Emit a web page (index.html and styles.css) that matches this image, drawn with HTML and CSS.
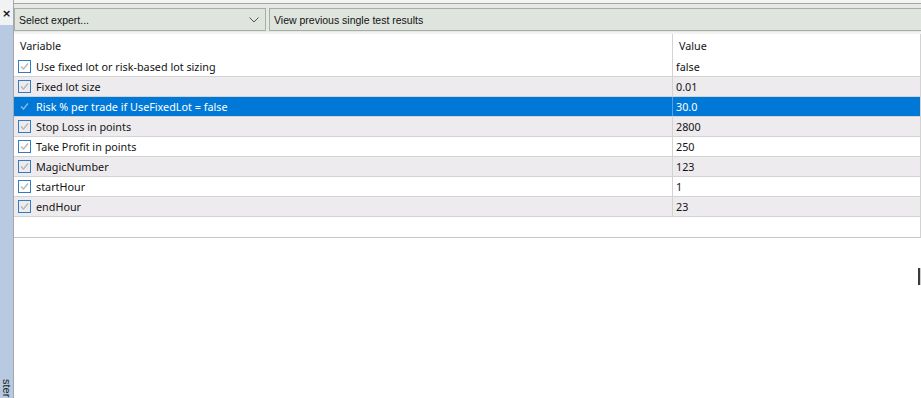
FILE: index.html
```html
<!DOCTYPE html>
<html>
<head>
<meta charset="utf-8">
<link rel="stylesheet" href="styles.css">
</head>
<body>
<div class="side">
  <div class="side-top"><span class="close">×</span></div>
  <div class="side-tab"><span class="tab-label">ster</span></div>
</div>
<div class="main">
  <div class="topline"></div>
  <div class="toolbar">
    <div class="select"><span>Select expert...</span>
      <svg class="chev" width="10" height="6" viewBox="0 0 10 6"><path d="M0.5 0.5 L5 5 L9.5 0.5" fill="none" stroke="#555" stroke-width="1"/></svg>
    </div>
    <div class="button">View previous single test results</div>
  </div>
  <div class="gap"></div>
  <div class="grid">
    <div class="head"><div class="cell c1">Variable</div><div class="cell c2">Value</div></div>
    <div class="row"><div class="cell c1"><span class="cb"><svg width="11" height="11" viewBox="0 0 11 11"><path d="M2 5.5 L4.5 8 L9 2.5" fill="none" stroke="#b4b4b4" stroke-width="1.2"/></svg></span>Use fixed lot or risk-based lot sizing</div><div class="cell c2">false</div></div>
    <div class="row alt"><div class="cell c1"><span class="cb"><svg width="11" height="11" viewBox="0 0 11 11"><path d="M2 5.5 L4.5 8 L9 2.5" fill="none" stroke="#b4b4b4" stroke-width="1.2"/></svg></span>Fixed lot size</div><div class="cell c2">0.01</div></div>
    <div class="row sel"><div class="cell c1"><span class="cb"><svg width="11" height="11" viewBox="0 0 11 11"><path d="M2 5.5 L4.5 8 L9 2.5" fill="none" stroke="#9fb9d6" stroke-width="1.2"/></svg></span>Risk % per trade if UseFixedLot = false</div><div class="cell c2">30.0</div></div>
    <div class="row alt"><div class="cell c1"><span class="cb"><svg width="11" height="11" viewBox="0 0 11 11"><path d="M2 5.5 L4.5 8 L9 2.5" fill="none" stroke="#b4b4b4" stroke-width="1.2"/></svg></span>Stop Loss in points</div><div class="cell c2">2800</div></div>
    <div class="row"><div class="cell c1"><span class="cb"><svg width="11" height="11" viewBox="0 0 11 11"><path d="M2 5.5 L4.5 8 L9 2.5" fill="none" stroke="#b4b4b4" stroke-width="1.2"/></svg></span>Take Profit in points</div><div class="cell c2">250</div></div>
    <div class="row alt"><div class="cell c1"><span class="cb"><svg width="11" height="11" viewBox="0 0 11 11"><path d="M2 5.5 L4.5 8 L9 2.5" fill="none" stroke="#b4b4b4" stroke-width="1.2"/></svg></span>MagicNumber</div><div class="cell c2">123</div></div>
    <div class="row"><div class="cell c1"><span class="cb"><svg width="11" height="11" viewBox="0 0 11 11"><path d="M2 5.5 L4.5 8 L9 2.5" fill="none" stroke="#b4b4b4" stroke-width="1.2"/></svg></span>startHour</div><div class="cell c2">1</div></div>
    <div class="row alt"><div class="cell c1"><span class="cb"><svg width="11" height="11" viewBox="0 0 11 11"><path d="M2 5.5 L4.5 8 L9 2.5" fill="none" stroke="#b4b4b4" stroke-width="1.2"/></svg></span>endHour</div><div class="cell c2">23</div></div>
    <div class="empty"></div>
  </div>
  <div class="below"><span class="cursor"></span></div>
</div>
</body>
</html>
```

FILE: styles.css
```css
* { box-sizing: border-box; }
html, body { margin: 0; padding: 0; }
body {
  width: 921px;
  height: 398px;
  overflow: hidden;
  display: flex;
  background: #ffffff;
  font-family: "Noto Sans", "Open Sans", sans-serif;
  font-size: 10.8px;
  color: #141414;
}
.side {
  width: 14px;
  flex: none;
  display: flex;
  flex-direction: column;
  border-right: 1px solid #a3a8ae;
}
.side-top {
  height: 25px;
  background: #f1f2f4;
  display: flex;
  justify-content: center;
  padding-top: 8px;
}
.close {
  font-family: "DejaVu Sans", sans-serif;
  font-weight: bold;
  font-size: 11px;
  line-height: 11px;
  color: #111;
}
.side-tab {
  flex: 1;
  background: #b7cae2;
  display: flex;
  flex-direction: column;
  justify-content: flex-end;
  align-items: center;
  overflow: hidden;
}
.tab-label {
  writing-mode: vertical-rl;
  font-family: "Liberation Sans", sans-serif;
  font-size: 11px;
  line-height: 12px;
  color: #222;
  margin-bottom: 1px;
}
.main {
  flex: 1;
  display: flex;
  flex-direction: column;
  min-width: 0;
}
.topline {
  height: 4px;
  background: #f4f4f4;
  border-bottom: 1px solid #a4a4a4;
}
.toolbar {
  height: 28px;
  background: #e4e9e3;
  display: flex;
  gap: 3px;
  padding-top: 4px;
  font-family: "Liberation Sans", sans-serif;
  font-size: 10.5px;
  color: #111;
}
.select {
  width: 252px;
  height: 23px;
  border: 1px solid #a7aea6;
  background: #dfe5de;
  display: flex;
  align-items: center;
  justify-content: space-between;
  padding: 0 6px 0 4px;
}
.button {
  flex: 1;
  height: 23px;
  border: 1px solid #a7aea6;
  border-right: none;
  background: #dfe5de;
  display: flex;
  align-items: center;
  padding-left: 4px;
}
.gap {
  height: 2px;
  background: #f3f3f3;
}
.grid {
  border-right: 1px solid #d2d2d2;
  border-bottom: 1px solid #c8c8c8;
}
.head, .row {
  display: grid;
  grid-template-columns: 659px 1fr;
}
.head { height: 23px; background: #fff; }
.row { height: 20px; border-bottom: 1px solid #d3d3d3; background: #fff; }
.row.alt { background: #eeebee; }
.row.sel { background: #0078d7; color: #fff; }
.cell {
  display: flex;
  align-items: center;
  white-space: nowrap;
  overflow: hidden;
}
.c1 { border-right: 1px solid #d3d3d3; padding-left: 4px; }
.head .c1 { padding-left: 6px; }
.head .c2 { padding-left: 6px; }
.c2 { padding-left: 3px; }
.row.sel .c1 { border-right-color: #5aa0e0; }
.cb {
  width: 13px;
  height: 13px;
  border: 1px solid #2f7cc4;
  background: #fff;
  margin-right: 5px;
  display: flex;
  align-items: center;
  justify-content: center;
  flex: none;
}
.row.alt .cb { background: #eeebee; }
.row.sel .cb { background: #0078d7; border-color: #0078d7; }
.empty { height: 20px; }
.below {
  flex: 1;
  position: relative;
}
.cursor {
  position: absolute;
  right: 0;
  top: 30px;
  width: 3px;
  height: 17px;
  border-left: 2px solid #3a3a3a;
  background: #cfcfcf;
}
```
